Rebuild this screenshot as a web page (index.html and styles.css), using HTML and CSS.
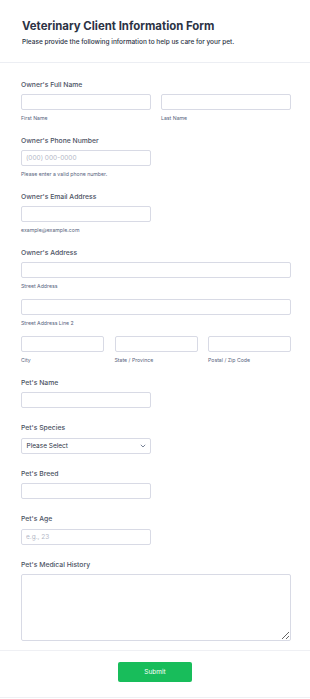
FILE: index.html
```html
<!DOCTYPE html>
<html lang="en">
<head>
    <meta charset="UTF-8">
    <meta name="viewport" content="width=device-width, initial-scale=1.0">
    <title>Veterinary Client Information Form</title>
    <link rel="stylesheet" href="styles.css">
</head>
<body>
    <div class="page">
        <!-- Header -->
        <div class="form-header">
            <h1>Veterinary Client Information Form</h1>
            <p>Please provide the following information to help us care for your pet.</p>
        </div>

        <!-- Fields -->
        <form class="form-body">
            <div class="field has-sub">
                <label class="field-label">Owner's Full Name</label>
                <div class="row cols-2">
                    <div class="col">
                        <input type="text">
                        <span class="sub-label">First Name</span>
                    </div>
                    <div class="col">
                        <input type="text">
                        <span class="sub-label">Last Name</span>
                    </div>
                </div>
            </div>

            <div class="field has-sub">
                <label class="field-label">Owner's Phone Number</label>
                <div class="col short">
                    <input type="tel" placeholder="(000) 000-0000">
                    <span class="sub-label">Please enter a valid phone number.</span>
                </div>
            </div>

            <div class="field has-sub">
                <label class="field-label">Owner's Email Address</label>
                <div class="col short">
                    <input type="email">
                    <span class="sub-label">example@example.com</span>
                </div>
            </div>

            <div class="field has-sub">
                <label class="field-label">Owner's Address</label>
                <div class="col">
                    <input type="text">
                    <span class="sub-label">Street Address</span>
                </div>
                <div class="col next-row">
                    <input type="text">
                    <span class="sub-label">Street Address Line 2</span>
                </div>
                <div class="row cols-3 next-row">
                    <div class="col">
                        <input type="text">
                        <span class="sub-label">City</span>
                    </div>
                    <div class="col">
                        <input type="text">
                        <span class="sub-label">State / Province</span>
                    </div>
                    <div class="col">
                        <input type="text">
                        <span class="sub-label">Postal / Zip Code</span>
                    </div>
                </div>
            </div>

            <div class="field">
                <label class="field-label">Pet's Name</label>
                <div class="col short"><input type="text"></div>
            </div>

            <div class="field">
                <label class="field-label">Pet's Species</label>
                <div class="col short">
                    <div class="select">
                        <span>Please Select</span>
                        <svg width="6" height="4" viewBox="0 0 6 4"><path d="M0.8 0.8 L3 3 L5.2 0.8" fill="none" stroke="#57647e" stroke-width="0.8"/></svg>
                    </div>
                </div>
            </div>

            <div class="field">
                <label class="field-label">Pet's Breed</label>
                <div class="col short"><input type="text"></div>
            </div>

            <div class="field">
                <label class="field-label">Pet's Age</label>
                <div class="col short"><input type="text" placeholder="e.g., 23"></div>
            </div>

            <div class="field last">
                <label class="field-label">Pet's Medical History</label>
                <textarea></textarea>
            </div>
        </form>

        <!-- Footer -->
        <div class="form-footer">
            <button type="button" class="submit-btn">Submit</button>
        </div>
    </div>
</body>
</html>
```

FILE: styles.css
```css
* {
    margin: 0;
    padding: 0;
    box-sizing: border-box;
}

body {
    font-family: Inter, "Noto Sans", Arial, sans-serif;
    background-color: #fff;
    color: #2c3345;
}

.page {
    width: 310px;
}

/* Header */
.form-header {
    padding: 16.5px 19px 15.5px 22px;
    border-bottom: 1px solid #eceef3;
}

.form-header h1 {
    font-size: 11.4px;
    line-height: 18px;
    font-weight: 700;
    color: #2c3345;
}

.form-header p {
    margin-top: 2px;
    font-size: 6.5px;
    line-height: 10px;
    font-weight: 500;
    color: #2c3345;
}

/* Fields */
.form-body {
    padding: 17px 19px 9.5px 21px;
}

.field {
    padding-bottom: 15px;
}

.field.has-sub {
    padding-bottom: 12.7px;
}

.field.last {
    padding-bottom: 0;
}

.field-label {
    display: block;
    font-size: 6.8px;
    line-height: 10px;
    font-weight: 500;
    color: #4b5263;
    margin-bottom: 4.3px;
}

.row {
    display: flex;
}

.cols-2 {
    gap: 10px;
}

.cols-3 {
    gap: 10.5px;
}

.row .col {
    flex: 1;
}

.col {
    display: flex;
    flex-direction: column;
}

.col.short {
    width: 130px;
}

.next-row {
    margin-top: 8px;
}

input,
.select,
textarea {
    width: 100%;
    height: 16px;
    border: 1px solid #d8dae5;
    border-radius: 2px;
    background-color: #fff;
    font-family: Inter, "Noto Sans", Arial, sans-serif;
    font-size: 6.5px;
    color: #2c3345;
    padding: 0 4px;
    outline: none;
}

input::placeholder {
    color: #b3b7c6;
}

.select {
    display: flex;
    align-items: center;
    justify-content: space-between;
    padding: 0 4px 0 4.5px;
    height: 16.5px;
}

textarea {
    display: block;
    height: 66.6px;
    resize: vertical;
}

.sub-label {
    display: block;
    margin-top: 3px;
    font-size: 5.2px;
    line-height: 10px;
    color: #57647e;
}

/* Footer */
.form-footer {
    border-top: 1px solid #eff0f4;
    border-bottom: 1px solid #eff0f4;
    padding: 11px 0 15px;
    display: flex;
    justify-content: center;
}

.submit-btn {
    width: 74px;
    height: 20px;
    border: none;
    border-radius: 2px;
    background-color: #18bd5b;
    color: #fff;
    font-family: Inter, "Noto Sans", Arial, sans-serif;
    font-size: 6.5px;
    font-weight: 400;
    cursor: pointer;
}
```
